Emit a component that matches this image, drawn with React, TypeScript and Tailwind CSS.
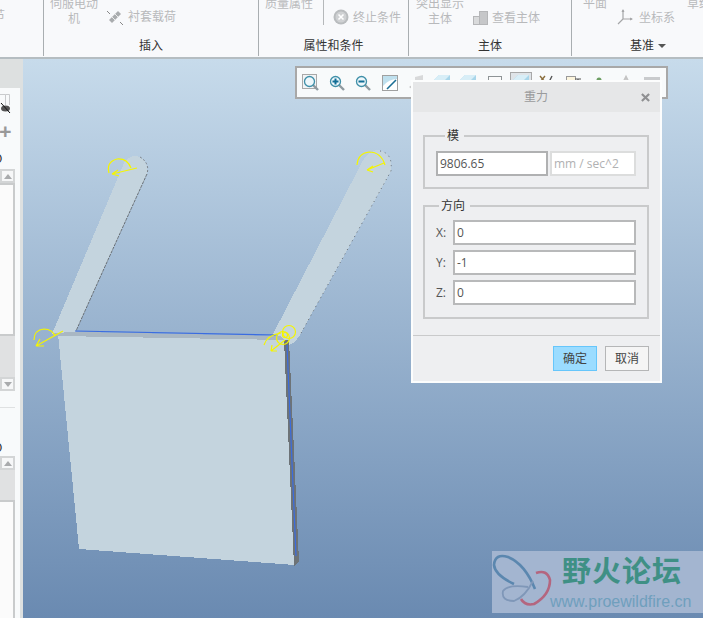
import type { ReactNode } from "react";

const cjk = "font-['Open_Sans','Noto_Sans_CJK_SC',sans-serif]";

function GroupLabel({ children }: { children: ReactNode }) {
  return (
    <div className="absolute bottom-[2px] left-0 right-0 text-center text-[12px] leading-[16px] text-[#333]">
      {children}
    </div>
  );
}

function Loupe({ mark }: { mark?: "plus" | "minus" | "box" }) {
  return (
    <svg viewBox="0 0 20 20" className="h-5 w-5">
      {mark === "box" && <rect x="1.5" y="1.5" width="14" height="14" fill="#f2f4f6" stroke="#a8a8a8" />}
      <line x1="11" y1="11" x2="17" y2="17" stroke="#8f9aa0" strokeWidth="2.4" />
      <circle cx="8.5" cy="8.5" r="5" fill="#eef7fb" stroke="#3f8fa8" strokeWidth="1.3" />
      {mark === "plus" && <path d="M5.5 8.5h6M8.5 5.5v6" stroke="#116e96" strokeWidth="2" />}
      {mark === "minus" && <path d="M5.5 8.5h6" stroke="#116e96" strokeWidth="2" />}
    </svg>
  );
}

function Tool({ children, active }: { children: ReactNode; active?: boolean }) {
  return (
    <div
      className={
        active
          ? "h-5 w-5 shrink-0 bg-[#dfe4e8] outline-1 outline-[#a8a8a8]"
          : "h-5 w-5 shrink-0"
      }
    >
      {children}
    </div>
  );
}

function Toolbar() {
  const box = (
    <svg viewBox="0 0 20 20" className="h-5 w-5">
      <path d="M2 17V7l5-5h11v15z" fill="#a9d6ea" />
      <path d="M2 7l5-5h11l-5 5z" fill="#d8eef7" />
    </svg>
  );
  return (
    <div className="absolute left-[272px] top-[7px] flex h-[33px] w-[373px] items-start justify-between border-2 border-[#a8a8a8] bg-[#f8fafb] px-[4px] pt-[5px]">
      <Tool><Loupe mark="box" /></Tool>
      <Tool><Loupe mark="plus" /></Tool>
      <Tool><Loupe mark="minus" /></Tool>
      <Tool>
        <svg viewBox="0 0 20 20" className="h-5 w-5">
          <rect x="2.5" y="2.5" width="15" height="15" fill="#fff" stroke="#a0a0a0" />
          <path d="M3 3h14v3Q9 6 3 13z" fill="#bfe0ee" />
          <path d="M7 16L16 7" stroke="#1c6f95" strokeWidth="1.6" />
        </svg>
      </Tool>
      <Tool>
        <svg viewBox="0 0 20 20" className="h-5 w-5">
          <path d="M9 4l8-2v8H9z" fill="#d8d9da" />
          <path d="M3 14l3-2v4z" fill="#c8c8c8" />
        </svg>
      </Tool>
      <Tool>{box}</Tool>
      <Tool>{box}</Tool>
      <Tool>
        <svg viewBox="0 0 20 20" className="h-5 w-5">
          <rect x="3.5" y="3.5" width="13" height="13" fill="#fbfbfb" stroke="#8e9496" />
          <path d="M3 8h14M11 8v8" stroke="#8e9496" />
        </svg>
      </Tool>
      <Tool active>{box}</Tool>
      <Tool>
        <svg viewBox="0 0 20 20" className="h-5 w-5">
          <path d="M3 3l5 6M8 3L3 9" stroke="#8a6d3b" strokeWidth="1.4" />
          <path d="M12 9l3-6" stroke="#555" strokeWidth="1.4" />
        </svg>
      </Tool>
      <Tool>
        <svg viewBox="0 0 20 20" className="h-5 w-5">
          <rect x="3.5" y="3.5" width="9" height="14" fill="#fcf5dd" stroke="#9a9a9a" />
          <path d="M12 6h6M15 6v3" stroke="#555" strokeWidth="1.2" />
        </svg>
      </Tool>
      <Tool>
        <svg viewBox="0 0 20 20" className="h-5 w-5">
          <circle cx="10" cy="7" r="2.5" fill="#6d9f63" />
        </svg>
      </Tool>
      <Tool>
        <svg viewBox="0 0 20 20" className="h-5 w-5">
          <path d="M6 12l4-8 4 8" fill="none" stroke="#c4c4c4" strokeWidth="2" />
        </svg>
      </Tool>
      <Tool>
        <svg viewBox="0 0 20 20" className="h-5 w-5">
          <rect x="2" y="4" width="16" height="3" fill="#c9cbcd" />
          <rect x="2" y="7" width="16" height="9" fill="#e4e5e6" />
        </svg>
      </Tool>
    </div>
  );
}

function Ribbon() {
  return (
    <div className="flex h-[59px] shrink-0 border-b-2 border-[#b5bdc1] bg-[#f8f9fb] text-[12px] leading-[15px] text-[#b8b9bb]">
      <div className="relative h-[56px] w-[44px] shrink-0 overflow-hidden border-r border-[#a9aeb1]">
        <div className="absolute left-[-7px] top-[8px]">节</div>
      </div>

      <div className="relative h-[56px] w-[215px] shrink-0 overflow-hidden border-r border-[#a9aeb1]">
        <div className="flex">
          <div className="ml-[6px] mt-[-4px] w-[48px] shrink-0 text-center">
            伺服电动
            <br />
            机
          </div>
          <div className="ml-[8px] mt-[7px] flex items-center gap-[4px]">
            <svg viewBox="0 0 18 18" className="h-[18px] w-[18px]">
              <path d="M3 12l9-9 3 3-9 9z" fill="#a9acae" />
              <path d="M6 9l3 3M9 6l3 3" stroke="#ececec" />
              <path d="M1 3l3 3M14 14l3 3" stroke="#888" />
            </svg>
            <span className="whitespace-nowrap">衬套载荷</span>
          </div>
        </div>
        <GroupLabel>插入</GroupLabel>
      </div>

      <div className="relative h-[56px] w-[150px] shrink-0 overflow-hidden border-r border-[#a9aeb1]">
        <div className="flex">
          <div className="ml-[6px] mt-[-4px] h-[29px] w-[59px] shrink-0 border-r border-[#b5b8ba] whitespace-nowrap">
            质量属性
          </div>
          <div className="ml-[9px] mt-[9px] flex items-center gap-[4px]">
            <svg viewBox="0 0 16 16" className="h-4 w-4">
              <circle cx="8" cy="8" r="7.5" fill="#b9bcbe" />
              <circle cx="8" cy="8" r="5.5" fill="#cfd1d3" />
              <path d="M5.5 5.5l5 5M10.5 5.5l-5 5" stroke="#fff" strokeWidth="1.6" />
            </svg>
            <span className="whitespace-nowrap">终止条件</span>
          </div>
        </div>
        <GroupLabel>属性和条件</GroupLabel>
      </div>

      <div className="relative h-[56px] w-[163px] shrink-0 overflow-hidden border-r border-[#a9aeb1]">
        <div className="flex">
          <div className="ml-[6px] mt-[-4px] w-[50px] shrink-0 text-center whitespace-nowrap">
            突出显示
            <br />
            主体
          </div>
          <div className="ml-[8px] mt-[9px] flex items-center gap-[4px]">
            <svg viewBox="0 0 15 15" className="h-[15px] w-[15px]">
              <rect x="0.5" y="6.5" width="8" height="8" fill="#d9dadb" stroke="#b5b6b8" />
              <rect x="6.5" y="1.5" width="8" height="13" fill="#c6c7c9" stroke="#b5b6b8" />
            </svg>
            <span className="whitespace-nowrap">查看主体</span>
          </div>
        </div>
        <GroupLabel>主体</GroupLabel>
      </div>

      <div className="relative h-[56px] min-w-0 flex-1 overflow-hidden">
        <div className="flex">
          <div className="ml-[11px] mt-[-4px] w-[24px] shrink-0 whitespace-nowrap">平面</div>
          <div className="ml-[10px] mt-[8px] flex items-center gap-[4px]">
            <svg viewBox="0 0 18 18" className="h-[18px] w-[18px]">
              <path d="M6 2v9l9 0M6 11l-5 5" fill="none" stroke="#a5a6a8" strokeWidth="1.2" />
              <path d="M4.5 4L6 1l1.5 3zM13 9.5l3 1.5-3 1.5z" fill="#a5a6a8" />
            </svg>
            <span className="whitespace-nowrap">坐标系</span>
          </div>
          <div className="ml-[12px] mt-[-4px] whitespace-nowrap">草绘</div>
        </div>
        <div className="absolute bottom-[2px] left-[58px] flex items-center gap-[4px] text-[12px] leading-[16px] text-[#333]">
          基准
          <svg viewBox="0 0 8 4" className="h-[4px] w-[8px]">
            <path d="M0 0h8L4 4z" fill="#555" />
          </svg>
        </div>
      </div>
    </div>
  );
}

function ScrollArrow({ down }: { down?: boolean }) {
  return (
    <div className="flex h-[14px] items-center justify-center border-2 border-[#d3d5d6] bg-[#f6f7f8]">
      <svg viewBox="0 0 8 5" className="h-[5px] w-[8px]">
        <path d={down ? "M0 0h8L4 5z" : "M0 5h8L4 0z"} fill="#a9abad" />
      </svg>
    </div>
  );
}

function SidePanel() {
  return (
    <div className="flex w-[23px] shrink-0 flex-col overflow-hidden bg-[#dde0e0] pr-[3px] pt-[29px]">
      <div className="flex min-h-0 flex-1 flex-col bg-[#f8fafb]">
        <svg viewBox="0 0 20 32" className="h-[32px] w-[20px] shrink-0">
          <path d="M-2 6.5H5.5V17M9.5 6.5V17M5.5 6.5H9.5" fill="none" stroke="#c9cbcd" />
          <ellipse cx="5.5" cy="20.5" rx="4.5" ry="3" fill="#555" />
          <path d="M1 15L10 25" stroke="#111" />
        </svg>
        <div className="-ml-[1px] h-[20px] text-[22px] font-bold leading-[20px] text-[#999]">+</div>
        <div className="mt-[10px] -ml-[7px] h-[17px] text-[12px] leading-[17px] text-[#222]">O</div>
        <div className="w-[15px] shrink-0">
          <div className="mt-[2px]"><ScrollArrow /></div>
          <div className="h-[153px] border-2 border-[#c9cbcc] border-l-0 bg-[#fbfbfb]" />
          <div className="h-[41px] bg-[#e0e1e2]" />
          <ScrollArrow down />
        </div>
        <div className="mt-[16px] h-px w-[15px] bg-[#dfe1e2]" />
        <div className="mt-[31px] -ml-[7px] h-[17px] text-[12px] leading-[17px] text-[#222]">O</div>
        <div className="flex min-h-0 w-[15px] flex-1 flex-col">
          <ScrollArrow />
          <div className="h-[30px] shrink-0 bg-[#e0e1e2]" />
          <div className="flex-1 border-2 border-b-0 border-l-0 border-[#c9cbcc] bg-[#fbfbfb]" />
        </div>
      </div>
    </div>
  );
}

function Model() {
  const y = "#f5f500";
  return (
    <svg viewBox="23 59 680 559" className="absolute inset-0 h-full w-full">
      <g fill="#c4d4de" shapeRendering="crispEdges">
        <path d="M52 334L124 163Q130 155 137 156Q149 160 147 174Q110 255 75 333z" />
        <path d="M273 334L358 170Q366 151 378 150Q393 153 391 171L300 335Q293 346 285 346z" />
        <path d="M58 334L285 338L295 565L79 549z" />
      </g>
      <path d="M52 333L75 332L280 336L285 340L58 336z" fill="#a9b7c3" shapeRendering="crispEdges" />
      <path d="M284 340L289 340L299 562L294 566z" fill="#6d7377" shapeRendering="crispEdges" />
      <path d="M75 331L278 335M287 345L296 556" fill="none" stroke="#3a6ce0" strokeWidth="1.2" />
      <path d="M147 174Q110 255 76 331" fill="none" stroke="#666c72" strokeWidth="1" strokeDasharray="3 1" />
      <path d="M140 157Q150 163 147 174" fill="none" stroke="#7c8288" strokeWidth="1" strokeDasharray="2 2" />
      <path d="M380 151Q393 153 391 171L300 335" fill="none" stroke="#666c72" strokeWidth="1" strokeDasharray="1 4" />
      <g fill="none" stroke={y} strokeWidth="1.2">
        <path d="M109 173Q106 162 117 159Q127 158 131 168" />
        <path d="M137 168L112 174M112 174l6-4M112 174l7 2" />
        <path d="M357 165Q358 153 369 152Q381 152 385 165" />
        <path d="M384 163L367 170M367 170l6-4M367 170l6 2" />
        <path d="M34 340Q34 330 44 329Q52 329 55 336" />
        <path d="M63 331L36 346M36 346l8 0M36 346l4-7" />
        <circle cx="289" cy="332" r="6.5" />
        <circle cx="283" cy="338" r="6.5" />
        <circle cx="285" cy="335" r="2.5" />
        <path d="M264 345Q267 335 281 333" />
        <path d="M285 340L271 351M271 351l6 0M271 351l1-6" />
      </g>
    </svg>
  );
}

function Field({ label, value }: { label: string; value: string }) {
  return (
    <div className="flex items-center">
      <span className="w-[28px] pl-[11px] text-[12px] text-[#555]">{label}</span>
      <div className="flex h-[25px] w-[183px] items-center border-2 border-[#b8b9ba] bg-white pl-[2px] text-[12px] text-[#555]">
        {value}
      </div>
    </div>
  );
}

function GravityDialog() {
  return (
    <div className="absolute left-[388px] top-[21px] flex h-[303px] w-[251px] flex-col border-2 border-white/85 bg-[#eeeff1]">
      <div className="flex h-[30px] shrink-0 items-center bg-[#e6e7e8] pl-[111px] pr-[10px]">
        <span className="flex-1 text-[12px] text-[#9a9b9c]">重力</span>
        <svg viewBox="0 0 10 10" className="h-[9px] w-[9px]">
          <path d="M1 1l8 8M9 1L1 9" stroke="#8f9092" strokeWidth="2.4" />
        </svg>
      </div>
      <div className="pl-[10px]">
        <fieldset className="mt-[15px] h-[62px] w-[226px] border-2 border-[#c9cacb] px-[11px]">
          <legend className="ml-[9px] px-[2px] text-[12px] leading-[17px] text-[#333]">模&nbsp;</legend>
          <div className="mt-[7px] flex gap-[2px] text-[12px]">
            <div className="flex h-[25px] w-[112px] items-center border-2 border-[#b0b1b2] bg-white pl-[2px] text-[#555]">
              9806.65
            </div>
            <div className="flex h-[25px] w-[86px] items-center border-2 border-[#dcdddd] bg-white pl-[2px] text-[#b0b1b2]">
              mm / sec^2
            </div>
          </div>
        </fieldset>
        <fieldset className="mt-[8px] h-[122px] w-[226px] border-2 border-[#c9cacb]">
          <legend className="ml-[14px] px-[2px] text-[12px] leading-[17px] text-[#333]">方向&nbsp;</legend>
          <div className="mt-[6px] flex flex-col gap-[5px]">
            <Field label="X:" value="0" />
            <Field label="Y:" value="-1" />
            <Field label="Z:" value="0" />
          </div>
        </fieldset>
      </div>
      <div className="mt-[16px] h-px shrink-0 bg-[#c9cacb]" />
      <div className="mt-[10px] flex justify-end gap-[8px] pr-[11px] text-[12px] text-[#444]">
        <button className="h-[25px] w-[44px] border border-[#66c6fb] bg-[#9bdcff]">确定</button>
        <button className="h-[25px] w-[44px] border border-[#b5b6b7] bg-[#f5f5f5]">取消</button>
      </div>
    </div>
  );
}

function Watermark() {
  return (
    <div className="absolute bottom-[5px] right-0 flex h-[62px] w-[211px] bg-[#a3b5d0]">
      <svg viewBox="0 0 60 62" className="h-[62px] w-[60px] shrink-0">
        <g fill="none">
          <path d="M43 38Q33 13 16 6Q3 2 2 14Q3 24 22 33" stroke="#5b87af" strokeWidth="2.6" />
          <path d="M44 22Q55 18 58 29Q58 44 42 53Q33 55 29 48" stroke="#b4667f" strokeWidth="2.6" />
          <path d="M36 36Q16 33 11 40Q9 50 22 50Q33 46 41 30" stroke="#7f97b8" strokeWidth="1.8" />
        </g>
      </svg>
      <div className="flex min-w-0 flex-1 flex-col">
        <div className="ml-[10px] mt-[3px] whitespace-nowrap text-[29px] font-bold leading-[34px] tracking-[1px] text-[#3f9085]">
          野火论坛
        </div>
        <div className="-ml-[2px] mt-[5px] whitespace-nowrap font-['Liberation_Sans',sans-serif] text-[16px] leading-[18px] text-[#6f9fbd]">
          www.proewildfire.cn
        </div>
      </div>
    </div>
  );
}

export default function App() {
  return (
    <div className={`flex h-[618px] w-[703px] flex-col overflow-hidden ${cjk}`}>
      <Ribbon />
      <div className="flex min-h-0 flex-1">
        <SidePanel />
        <div className="relative flex-1 overflow-hidden bg-linear-to-b from-[#c7dbeb] to-[#6a8ab1]">
          <Model />
          <Toolbar />
          <GravityDialog />
          <Watermark />
        </div>
      </div>
    </div>
  );
}
